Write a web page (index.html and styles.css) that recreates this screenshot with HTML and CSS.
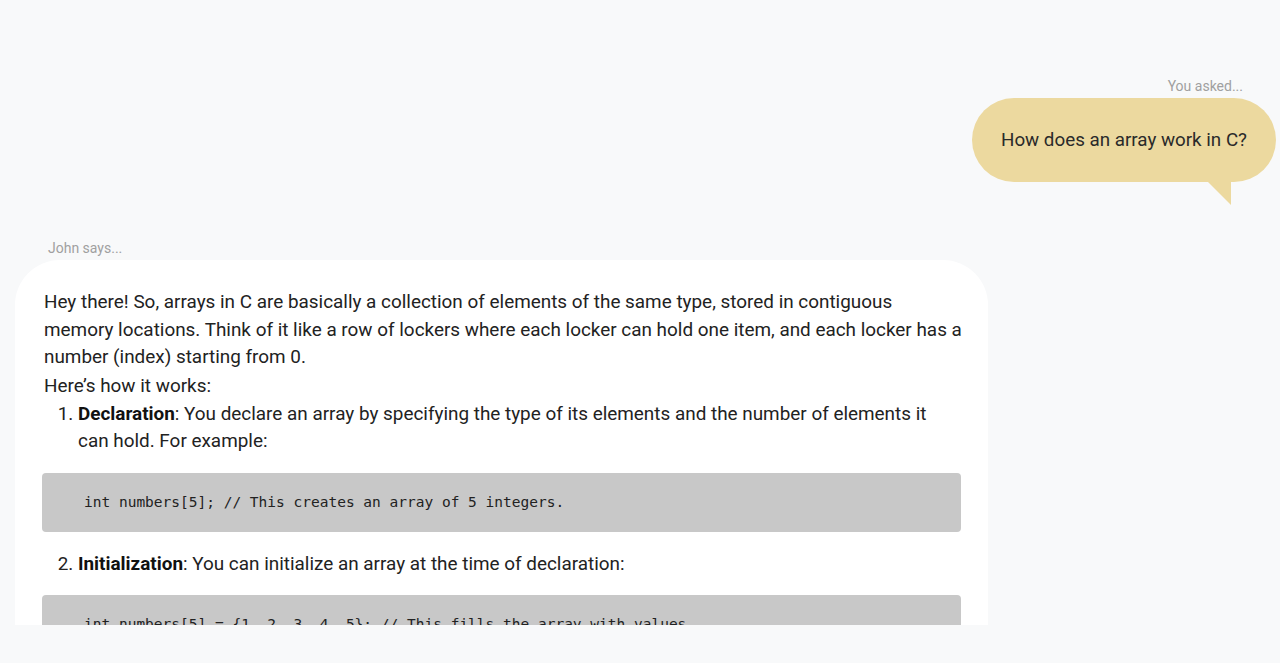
FILE: index.html
```html
<!DOCTYPE html>
<html lang="en">
<head>
<meta charset="utf-8">
<title>Chat</title>
<link rel="stylesheet" href="styles.css">
</head>
<body>
<main class="chat">
  <section class="msg msg-user">
    <div class="label">You asked...</div>
    <div class="bubble">How does an array work in C?</div>
  </section>
  <section class="msg msg-bot">
    <div class="label">John says...</div>
    <div class="card">
      <p>Hey there! So, arrays in C are basically a collection of elements of the same type, stored in contiguous memory locations. Think of it like a row of lockers where each locker can hold one item, and each locker has a number (index) starting from 0.</p>
      <p class="lead">Here’s how it works:</p>
      <ol>
        <li><strong>Declaration</strong>: You declare an array by specifying the type of its elements and the number of elements it can hold. For example:</li>
      </ol>
      <pre class="code"><code>int numbers[5]; // This creates an array of 5 integers.</code></pre>
      <ol start="2">
        <li><strong>Initialization</strong>: You can initialize an array at the time of declaration:</li>
      </ol>
      <pre class="code"><code>int numbers[5] = {1, 2, 3, 4, 5}; // This fills the array with values.</code></pre>
    </div>
  </section>
</main>
</body>
</html>
```

FILE: styles.css
```css
* { box-sizing: border-box; }
html, body {
  margin: 0;
  padding: 0;
  background: #f8f9fa;
}
body {
  font-family: "Roboto", "Liberation Sans", sans-serif;
  color: #222;
  height: 663px;
  overflow: hidden;
}
.chat {
  height: 625px;
  overflow: hidden;
  padding: 78px 4px 0 15px;
  display: flex;
  flex-direction: column;
}
.msg { display: flex; flex-direction: column; }
.label {
  font-size: 14px;
  line-height: 17px;
  color: #a0a0a0;
}
.msg-user { align-items: flex-end; }
.msg-user .label { margin-right: 33px; margin-bottom: 3px; }
.bubble {
  position: relative;
  background: #ecd99f;
  border-radius: 42px;
  height: 84px;
  padding: 0 29px;
  display: flex;
  align-items: center;
  font-size: 18.8px;
  color: #2a2a2a;
}
.bubble::after {
  content: "";
  position: absolute;
  top: 84px;
  right: 45px;
  width: 0;
  height: 0;
  border-top: 23px solid #ecd99f;
  border-left: 23px solid transparent;
}
.msg-bot { margin-top: 58px; }
.msg-bot .label { margin-left: 33px; margin-bottom: 3px; }
.card {
  width: 973px;
  background: #ffffff;
  border-radius: 45px 45px 0 0;
  padding: 28px 24px 40px 29px;
  font-size: 18.9px;
  line-height: 27.5px;
  color: #222;
}
.card p { margin: 0; }
.card p.lead { margin-top: 1.5px; }
.card ol {
  margin: 0;
  padding: 0 6px 0 34px;
}
.card strong { font-weight: 700; color: #111; }
.code {
  margin: 18px 3px 18px -2px;
  background: #c8c8c8;
  border-radius: 4px;
  padding: 20px 42px;
  font-family: "Liberation Mono", "DejaVu Sans Mono", monospace;
  font-size: 14.5px;
  line-height: 18px;
  color: #222;
  white-space: pre;
}
.code + ol + .code { margin-top: 17.5px; }
```
